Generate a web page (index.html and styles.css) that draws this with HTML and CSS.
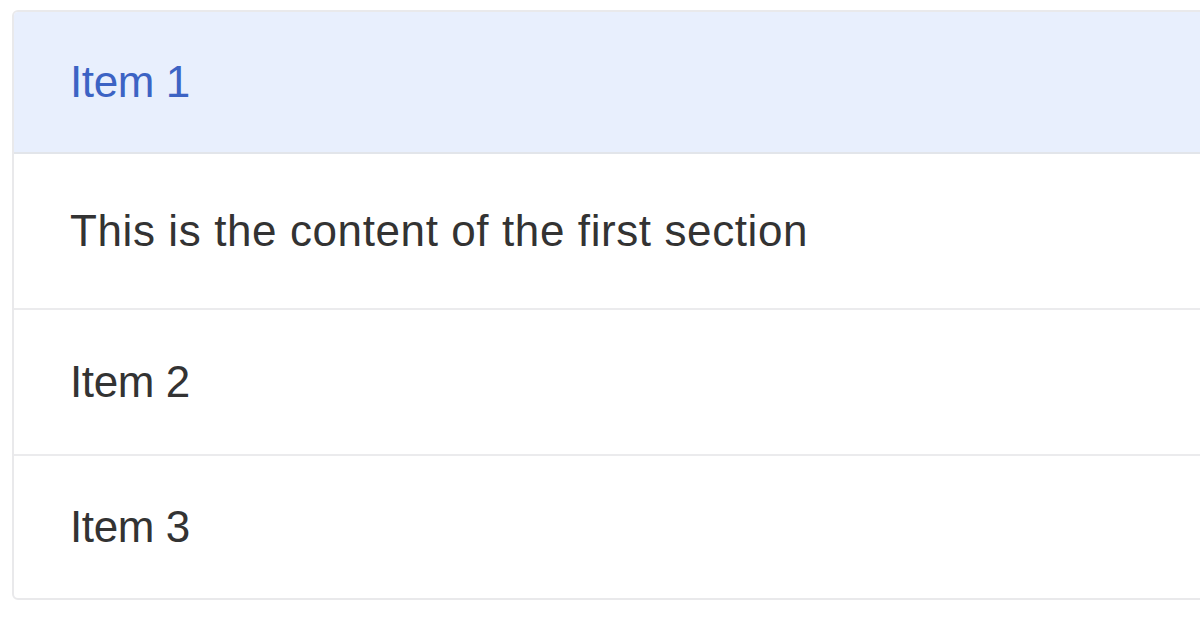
FILE: index.html
```html
<!DOCTYPE html>
<html lang="en">
<head>
<meta charset="utf-8">
<title>Collapse</title>
<link rel="stylesheet" href="styles.css">
</head>
<body>
<div class="collapse">
  <div class="panel">
    <div class="header header-active">Item 1</div>
    <div class="content">This is the content of the first section</div>
  </div>
  <div class="panel">
    <div class="header item2">Item 2</div>
  </div>
  <div class="panel">
    <div class="header item3">Item 3</div>
  </div>
</div>
</body>
</html>
```
FILE: styles.css
```css
html, body {
  margin: 0;
  padding: 0;
  background: #ffffff;
  overflow: hidden;
}
body {
  padding: 10px 0 0 12px;
  font-family: "Liberation Sans", Arial, sans-serif;
  font-size: 44px;
  line-height: 66px;
  color: #333333;
}
.collapse {
  width: 1220px;
  border: 2px solid #e9e9eb;
  border-radius: 6px;
  box-sizing: border-box;
  overflow: hidden;
}
.panel + .panel {
  border-top: 2px solid #ebebed;
}
.header {
  padding: 37px 0 37px 56px;
  letter-spacing: -0.4px;
}
.header-active {
  background: #e8effd;
  color: #3c63c4;
  border-bottom: 2px solid #e2e5ea;
}
.content {
  padding: 44px 0 44px 56px;
  color: #333333;
  letter-spacing: 0.6px;
}
.item2 {
  padding-top: 39px;
  padding-bottom: 39px;
}
.item3 {
  padding-top: 38px;
  padding-bottom: 38px;
}
```
